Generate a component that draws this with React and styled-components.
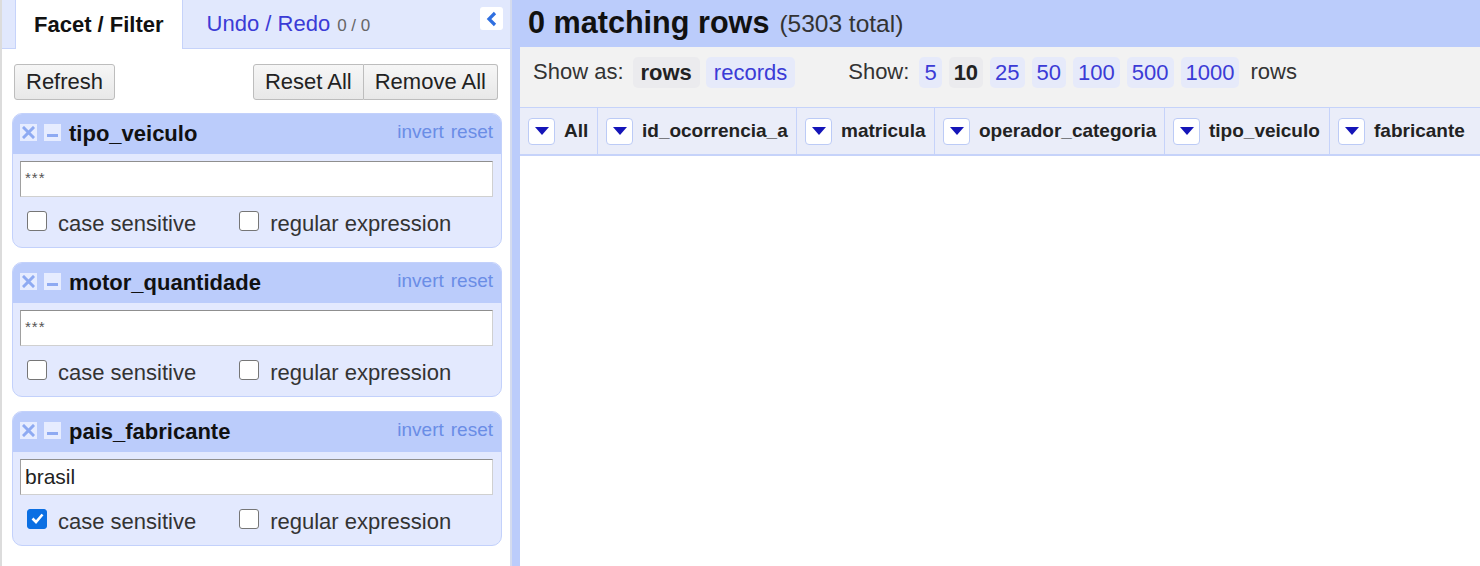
import React from 'react';
import styled, { createGlobalStyle } from 'styled-components';

const GlobalStyle = createGlobalStyle`
  html, body {
    margin: 0;
    padding: 0;
    background: #fff;
    font-family: "Liberation Sans", Arial, sans-serif;
    color: #222;
  }
  #root {
    height: 566px;
    overflow: hidden;
  }
`;

const Page = styled.div`
  display: flex;
  height: 566px;
`;

const LeftPanel = styled.div`
  width: 508px;
  flex-shrink: 0;
  border-left: 2px solid #dcdcdc;
  border-right: 2px solid #d4dbee;
  display: flex;
  flex-direction: column;
`;

const TabBar = styled.div`
  display: flex;
  align-items: stretch;
  height: 48px;
  background: #e1e8fd;
  border-bottom: 1px solid #c6d3fa;
  padding-left: 13px;
  padding-right: 7px;
`;

const Tab = styled.div`
  display: flex;
  align-items: center;
  font-size: 22px;
  ${(p) =>
    p.$active
      ? `
    background: #fff;
    font-weight: bold;
    color: #111;
    border-left: 1px solid #c6d3fa;
    border-right: 1px solid #c6d3fa;
    margin-bottom: -1px;
    padding: 0 18px;
  `
      : `
    color: #3b3bd6;
    padding-left: 24px;
  `}
`;

const Count = styled.span`
  font-size: 17px;
  color: #666;
  margin-left: 7px;
  margin-top: 3px;
`;

const Collapse = styled.div`
  margin-left: auto;
  margin-top: 7px;
  width: 23px;
  height: 23px;
  background: #fff;
  border-radius: 3px;
  display: flex;
  align-items: center;
  justify-content: center;
`;

const ButtonRow = styled.div`
  display: flex;
  padding: 15px 12px 0 12px;
  height: 36px;
`;

const Button = styled.button`
  font-family: "Liberation Sans", Arial, sans-serif;
  font-size: 22px;
  color: #222;
  background: linear-gradient(#f6f6f6, #e8e8e8);
  border: 1px solid #bdbdbd;
  border-radius: ${(p) => p.$radius || '3px'};
  padding: 0 11px;
  height: 36px;
  margin-left: ${(p) => (p.$push ? 'auto' : '0')};
`;

const FacetList = styled.div`
  display: flex;
  flex-direction: column;
  gap: 14px;
  padding: 13px 8px 0 10px;
`;

const Facet = styled.div`
  border: 1px solid #c3d1fb;
  border-radius: 10px;
  background: #e3e9fe;
  overflow: hidden;
`;

const FacetHeader = styled.div`
  display: flex;
  align-items: center;
  height: 40px;
  background: #bbccfb;
  padding: 0 8px 0 7px;
`;

const IconBox = styled.div`
  width: 17px;
  height: 17px;
  background: #e6ecff;
  display: flex;
  align-items: center;
  justify-content: center;
  margin-right: 7px;
  margin-top: -3px;
`;

const FacetTitle = styled.div`
  font-weight: bold;
  font-size: 22px;
  color: #111;
  margin-left: 1px;
`;

const FacetLinks = styled.div`
  margin-left: auto;
  display: flex;
  gap: 7px;
  font-size: 19px;
  color: #6a8de6;
  margin-top: -4px;
`;

const FacetBody = styled.div`
  padding: 7px 8px 10px 7px;
`;

const TextInput = styled.div`
  height: 36px;
  background: #fff;
  border: 1px solid #d0d0d0;
  border-top-color: #8f8f8f;
  border-left-color: #a0a0a0;
  display: flex;
  align-items: ${(p) => (p.$placeholder ? 'flex-start' : 'center')};
  padding: ${(p) => (p.$placeholder ? '7px 4px 0' : '0 4px')};
  box-sizing: border-box;
  font-size: ${(p) => (p.$placeholder ? '15px' : '21px')};
  color: ${(p) => (p.$placeholder ? '#555' : '#222')};
  letter-spacing: ${(p) => (p.$placeholder ? '1px' : '0')};
`;

const Options = styled.div`
  display: flex;
  padding: 14px 0 0 7px;
  gap: 43px;
`;

const Option = styled.label`
  display: flex;
  align-items: center;
  font-size: 22px;
  color: #333;
`;

const Check = styled.span`
  width: 20px;
  height: 20px;
  box-sizing: border-box;
  border-radius: 3px;
  margin-right: 11px;
  margin-top: -7px;
  display: flex;
  align-items: center;
  justify-content: center;
  ${(p) =>
    p.$on
      ? 'background: #0b6fe3; border: 1px solid #0b6fe3;'
      : 'background: #fff; border: 1px solid #767676;'}
`;

const RightPanel = styled.div`
  flex: 1;
  min-width: 0;
  background: #bbccfb;
  display: flex;
  flex-direction: column;
`;

const Summary = styled.div`
  height: 47px;
  display: flex;
  align-items: center;
  padding-left: 16px;
  padding-bottom: 2px;
  box-sizing: border-box;
  white-space: nowrap;
`;

const SummaryBold = styled.span`
  font-size: 30.6px;
  font-weight: bold;
  color: #111;
`;

const SummaryTotal = styled.span`
  font-size: 24.5px;
  color: #333;
  margin-left: 10px;
  margin-top: 3px;
`;

const View = styled.div`
  flex: 1;
  margin-left: 8px;
  background: #fff;
  display: flex;
  flex-direction: column;
  overflow: hidden;
`;

const Toolbar = styled.div`
  height: 60px;
  box-sizing: border-box;
  background: #f2f2f2;
  display: flex;
  align-items: flex-start;
  padding: 10px 0 0 13px;
  font-size: 22px;
  color: #333;
  white-space: nowrap;
`;

const Label = styled.span`
  line-height: 30px;
  margin-right: ${(p) => p.$after || '9px'};
  margin-left: ${(p) => p.$gap || '0'};
`;

const Chip = styled.span`
  line-height: 31px;
  padding: 0 ${(p) => (p.$tight ? '5px' : '8px')};
  border-radius: 5px;
  margin-right: ${(p) => (p.$tight ? '7px' : '6px')};
  ${(p) =>
    p.$current
      ? 'background: #ebebee; font-weight: bold; color: #222;'
      : 'background: #e6eafa; color: #3b3bd6;'}
`;

const HeaderRow = styled.div`
  display: flex;
  height: 46px;
  background: #eaedf9;
  border-top: 1px solid #c6d3fa;
  border-bottom: 2px solid #c6d3fa;
`;

const Column = styled.div`
  width: ${(p) => p.$w}px;
  flex-shrink: 0;
  display: flex;
  align-items: center;
  padding-left: 8px;
  box-sizing: border-box;
  border-right: 1px solid #c6d3fa;
  font-size: 19px;
  font-weight: bold;
  color: #222;
  white-space: nowrap;
`;

const Dropdown = styled.span`
  width: 27px;
  height: 27px;
  box-sizing: border-box;
  background: #fff;
  border: 1px solid #bccbf6;
  border-radius: 4px;
  display: flex;
  align-items: center;
  justify-content: center;
  margin-right: 9px;
`;

function CloseIcon() {
  return (
    <svg width="13" height="13" viewBox="0 0 13 13">
      <path d="M2 2 L11 11 M11 2 L2 11" stroke="#8eaaf2" strokeWidth="3" strokeLinecap="square" />
    </svg>
  );
}

function MinusIcon() {
  return (
    <svg width="13" height="13" viewBox="0 0 13 13">
      <rect x="1" y="8" width="11" height="3" fill="#8eaaf2" />
    </svg>
  );
}

function Triangle() {
  return (
    <svg width="14" height="9" viewBox="0 0 14 9">
      <path d="M0 0 L14 0 L7 8 Z" fill="#1515b8" />
    </svg>
  );
}

function CheckMark() {
  return (
    <svg width="13" height="11" viewBox="0 0 13 11">
      <path d="M1.5 5.5 L5 9 L11.5 1.5" stroke="#fff" strokeWidth="2.6" fill="none" />
    </svg>
  );
}

const facets = [
  { name: 'tipo_veiculo', value: '***', placeholder: true, caseSensitive: false },
  { name: 'motor_quantidade', value: '***', placeholder: true, caseSensitive: false },
  { name: 'pais_fabricante', value: 'brasil', placeholder: false, caseSensitive: true },
];

const columns = [
  { name: 'All', w: 78 },
  { name: 'id_ocorrencia_a', w: 199 },
  { name: 'matricula', w: 138 },
  { name: 'operador_categoria', w: 230 },
  { name: 'tipo_veiculo', w: 165 },
  { name: 'fabricante', w: 160 },
];

const sizes = ['5', '10', '25', '50', '100', '500', '1000'];

function FacetBox({ facet }) {
  return (
    <Facet>
      <FacetHeader>
        <IconBox><CloseIcon /></IconBox>
        <IconBox><MinusIcon /></IconBox>
        <FacetTitle>{facet.name}</FacetTitle>
        <FacetLinks>
          <span>invert</span>
          <span>reset</span>
        </FacetLinks>
      </FacetHeader>
      <FacetBody>
        <TextInput $placeholder={facet.placeholder}>{facet.value}</TextInput>
        <Options>
          <Option>
            <Check $on={facet.caseSensitive}>{facet.caseSensitive && <CheckMark />}</Check>
            case sensitive
          </Option>
          <Option>
            <Check />
            regular expression
          </Option>
        </Options>
      </FacetBody>
    </Facet>
  );
}

export default function App() {
  return (
    <>
      <GlobalStyle />
      <Page>
        <LeftPanel>
          <TabBar>
            <Tab $active>Facet / Filter</Tab>
            <Tab>
              Undo / Redo<Count>0 / 0</Count>
            </Tab>
            <Collapse>
              <svg width="12" height="16" viewBox="0 0 12 16">
                <path d="M9 2 L3 8 L9 14" stroke="#2f6fe0" strokeWidth="3.2" fill="none" />
              </svg>
            </Collapse>
          </TabBar>
          <ButtonRow>
            <Button>Refresh</Button>
            <Button $push $radius="3px 0 0 3px">Reset All</Button>
            <Button $radius="0 3px 3px 0" style={{ borderLeft: 'none' }}>Remove All</Button>
          </ButtonRow>
          <FacetList>
            {facets.map((f) => (
              <FacetBox key={f.name} facet={f} />
            ))}
          </FacetList>
        </LeftPanel>
        <RightPanel>
          <Summary>
            <SummaryBold>0 matching rows</SummaryBold>
            <SummaryTotal>(5303 total)</SummaryTotal>
          </Summary>
          <View>
            <Toolbar>
              <Label>Show as:</Label>
              <Chip $current>rows</Chip>
              <Chip>records</Chip>
              <Label $gap="47px" $after="10px">Show:</Label>
              {sizes.map((s) => (
                <Chip key={s} $tight $current={s === '10'}>{s}</Chip>
              ))}
              <Label $gap="4px">rows</Label>
            </Toolbar>
            <HeaderRow>
              {columns.map((c) => (
                <Column key={c.name} $w={c.w}>
                  <Dropdown><Triangle /></Dropdown>
                  {c.name}
                </Column>
              ))}
            </HeaderRow>
          </View>
        </RightPanel>
      </Page>
    </>
  );
}
